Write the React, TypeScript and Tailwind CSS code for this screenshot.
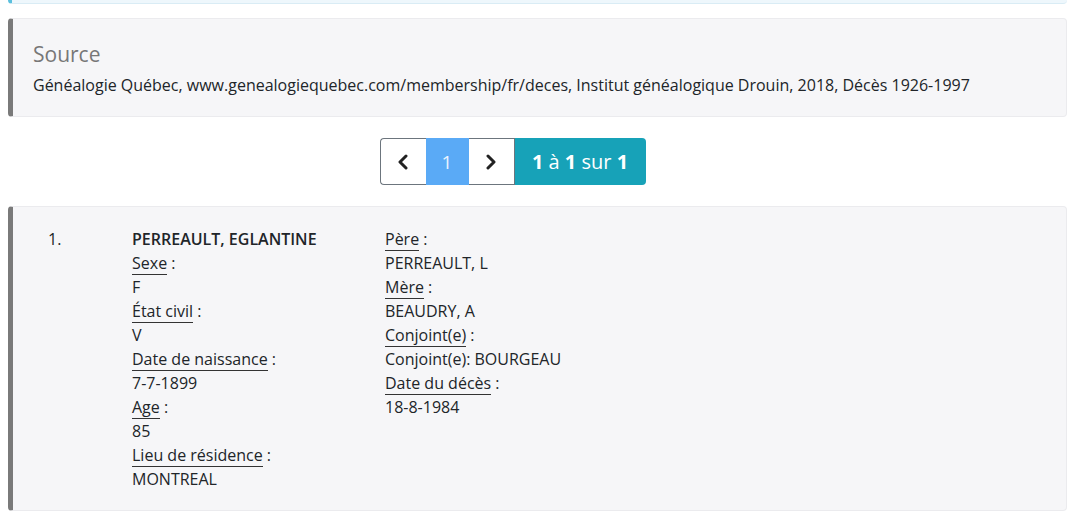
import React from "react";

const font = { fontFamily: '"Open Sans", "Noto Sans", sans-serif' };

function Label({ children }: { children: React.ReactNode }) {
  return (
    <div>
      <span className="border-b border-[#333]">{children}</span> :
    </div>
  );
}

function Chevron({ dir }: { dir: "left" | "right" }) {
  return (
    <svg width="14" height="16" viewBox="0 0 14 16" fill="none">
      <path
        d={dir === "left" ? "M10 2 L4 8 L10 14" : "M4 2 L10 8 L4 14"}
        stroke="#222"
        strokeWidth="3"
        strokeLinecap="round"
        strokeLinejoin="round"
      />
    </svg>
  );
}

export default function App() {
  return (
    <div className="min-h-[529px] bg-white text-[16px] leading-[24px] text-[#212529]" style={font}>
      <div className="ml-[8px] w-[1059px]">
        {/* tail of the panel above */}
        <div className="h-[4px] rounded-b-[4px] border-b border-l-[4px] border-b-[#d9ecf5] border-l-[#5bc0de] bg-[#eef7fc]" />

        {/* source panel */}
        <div className="mt-[14px] rounded-[4px] border border-l-[5px] border-[#ebebee] border-l-[#7a7a7a] bg-[#f6f6f8] pb-[19px] pl-[20px] pt-[22px]">
          <div className="text-[21px] leading-[26px] text-[#777]">Source</div>
          <div className="mt-[6px]">
            Généalogie Québec, www.genealogiequebec.com/membership/fr/deces, Institut généalogique Drouin, 2018, Décès 1926-1997
          </div>
        </div>

        {/* pagination */}
        <div className="mt-[21px] flex justify-center pr-[50px]">
          <div className="flex h-[47px]">
            <button className="flex w-[46px] items-center justify-center rounded-l-[4px] border border-r-0 border-[#6c757d] bg-white">
              <Chevron dir="left" />
            </button>
            <div className="flex w-[43px] items-center justify-center bg-[#5aaaf6] text-[19px] text-[#eaf4ff]">1</div>
            <button className="flex w-[46px] items-center justify-center border border-l-0 border-[#6c757d] bg-white">
              <Chevron dir="right" />
            </button>
            <div className="flex w-[131px] items-center justify-center rounded-r-[4px] bg-[#17a2b8] text-[20px] text-white">
              <b className="font-bold">1</b>&nbsp;à&nbsp;<b className="font-bold">1</b>&nbsp;sur&nbsp;<b className="font-bold">1</b>
            </div>
          </div>
        </div>

        {/* result */}
        <div className="mt-[21px] flex rounded-[4px] border border-l-[5px] border-[#ebebee] border-l-[#7a7a7a] bg-[#f6f6f8] pb-[19px] pt-[20px]">
          <div className="w-[119px] pl-[35px]">1.</div>
          <div className="w-[253px]">
            <div className="font-semibold">PERREAULT, EGLANTINE</div>
            <Label>Sexe</Label>
            <div>F</div>
            <Label>État civil</Label>
            <div>V</div>
            <Label>Date de naissance</Label>
            <div>7-7-1899</div>
            <Label>Age</Label>
            <div>85</div>
            <Label>Lieu de résidence</Label>
            <div>MONTREAL</div>
          </div>
          <div>
            <Label>Père</Label>
            <div>PERREAULT, L</div>
            <Label>Mère</Label>
            <div>BEAUDRY, A</div>
            <Label>Conjoint(e)</Label>
            <div>Conjoint(e): BOURGEAU</div>
            <Label>Date du décès</Label>
            <div>18-8-1984</div>
          </div>
        </div>
      </div>
    </div>
  );
}
